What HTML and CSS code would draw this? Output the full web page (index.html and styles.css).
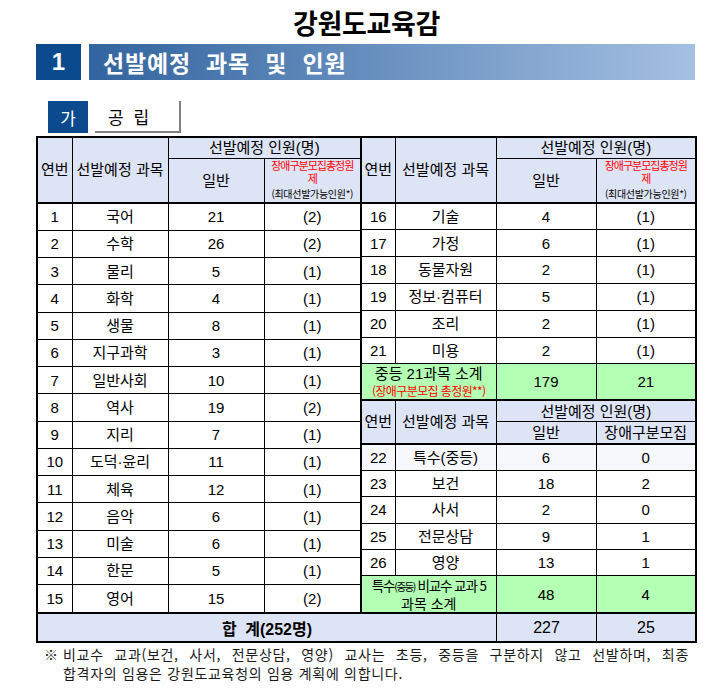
FILE: index.html
```html
<!DOCTYPE html>
<html lang="ko">
<head>
<meta charset="utf-8">
<title>강원도교육감</title>
<link rel="stylesheet" href="styles.css">
</head>
<body>
<div class="page">
  <h1 class="title">강원도교육감</h1>
  <div class="section">
    <div class="sec-num">1</div>
    <div class="sec-bar">선발예정 과목 및 인원</div>
  </div>
  <div class="sub">
    <div class="sub-num">가</div>
    <div class="sub-label">공 립</div>
  </div>

  <div class="tables">
    <table class="t lt">
      <colgroup><col class="lc1"><col class="lc2"><col class="lc3"><col class="lc4"></colgroup>
      <thead>
        <tr class="h1"><th rowspan="2" class="thick">연번</th><th rowspan="2" class="thick">선발예정 과목</th><th colspan="2">선발예정 인원(명)</th></tr>
        <tr class="h2"><th class="thick">일반</th><th class="thick dis"><div class="dis-box"><span class="red">장애구분모집총정원<br>제</span><span class="small">(최대선발가능인원*)</span></div></th></tr>
      </thead>
      <tbody>
        <tr class="lr"><td>1</td><td>국어</td><td>21</td><td>(2)</td></tr>
        <tr class="lr"><td>2</td><td>수학</td><td>26</td><td>(2)</td></tr>
        <tr class="lr"><td>3</td><td>물리</td><td>5</td><td>(1)</td></tr>
        <tr class="lr"><td>4</td><td>화학</td><td>4</td><td>(1)</td></tr>
        <tr class="lr"><td>5</td><td>생물</td><td>8</td><td>(1)</td></tr>
        <tr class="lr"><td>6</td><td>지구과학</td><td>3</td><td>(1)</td></tr>
        <tr class="lr"><td>7</td><td>일반사회</td><td>10</td><td>(1)</td></tr>
        <tr class="lr"><td>8</td><td>역사</td><td>19</td><td>(2)</td></tr>
        <tr class="lr"><td>9</td><td>지리</td><td>7</td><td>(1)</td></tr>
        <tr class="lr"><td>10</td><td>도덕·윤리</td><td>11</td><td>(1)</td></tr>
        <tr class="lr"><td>11</td><td>체육</td><td>12</td><td>(1)</td></tr>
        <tr class="lr"><td>12</td><td>음악</td><td>6</td><td>(1)</td></tr>
        <tr class="lr"><td>13</td><td>미술</td><td>6</td><td>(1)</td></tr>
        <tr class="lr"><td>14</td><td>한문</td><td>5</td><td>(1)</td></tr>
        <tr class="lr"><td>15</td><td>영어</td><td>15</td><td>(2)</td></tr>
      </tbody>
    </table>

    <table class="t rt">
      <colgroup><col class="rc1"><col class="rc2"><col class="rc3"><col class="rc4"></colgroup>
      <thead>
        <tr class="h1"><th rowspan="2" class="thick">연번</th><th rowspan="2" class="thick">선발예정 과목</th><th colspan="2">선발예정 인원(명)</th></tr>
        <tr class="h2"><th class="thick">일반</th><th class="thick dis"><div class="dis-box"><span class="red">장애구분모집총정원<br>제</span><span class="small">(최대선발가능인원*)</span></div></th></tr>
      </thead>
      <tbody>
        <tr class="ra"><td>16</td><td>기술</td><td>4</td><td>(1)</td></tr>
        <tr class="ra"><td>17</td><td>가정</td><td>6</td><td>(1)</td></tr>
        <tr class="ra"><td>18</td><td>동물자원</td><td>2</td><td>(1)</td></tr>
        <tr class="ra"><td>19</td><td>정보·컴퓨터</td><td>5</td><td>(1)</td></tr>
        <tr class="ra"><td>20</td><td>조리</td><td>2</td><td>(1)</td></tr>
        <tr class="ra"><td>21</td><td>미용</td><td>2</td><td>(1)</td></tr>
        <tr class="subt"><td colspan="2" class="green thick"><div class="st1">중등 21과목 소계</div><div class="st2">(장애구분모집 총정원**)</div></td><td class="green thick num-l">179</td><td class="green thick num-l">21</td></tr>
        <tr class="hb1"><th rowspan="2" class="thick">연번</th><th rowspan="2" class="thick">선발예정 과목</th><th colspan="2">선발예정 인원(명)</th></tr>
        <tr class="hb2"><th class="thick">일반</th><th class="thick">장애구분모집</th></tr>
        <tr class="rb tint"><td>22</td><td>특수(중등)</td><td>6</td><td>0</td></tr>
        <tr class="rb"><td>23</td><td>보건</td><td>18</td><td>2</td></tr>
        <tr class="rb"><td>24</td><td>사서</td><td>2</td><td>0</td></tr>
        <tr class="rb"><td>25</td><td>전문상담</td><td>9</td><td>1</td></tr>
        <tr class="rb"><td>26</td><td>영양</td><td>13</td><td>1</td></tr>
        <tr class="subt"><td colspan="2" class="green"><div class="sp1">특수<span class="sq">(중등)</span> 비교수 교과 5</div><div class="sp2">과목 소계</div></td><td class="green num-l">48</td><td class="green num-l">4</td></tr>
      </tbody>
    </table>
  </div>

  <div class="total">
    <div class="tl">합 계(252명)</div>
    <div class="tv">227</div>
    <div class="tv tv2">25</div>
  </div>

  <div class="note">
    <div class="nl1"><span class="mark">※</span><span class="txt1">비교수 교과(보건, 사서, 전문상담, 영양) 교사는 초등, 중등을 구분하지 않고 선발하며, 최종</span></div>
    <div class="nl2">합격자의 임용은 강원도교육청의 임용 계획에 의합니다.</div>
  </div>
</div>
</body>
</html>
```

FILE: styles.css
```css
* { box-sizing: border-box; }

body {
  margin: 0;
  background: #fff;
  color: #000;
  font-family: "Noto Sans CJK KR", sans-serif;
}

.page {
  width: 661px;
  margin-left: 36px;
}

.title {
  margin: 0;
  height: 44px;
  padding-top: 2px;
  font-size: 27px;
  line-height: 42px;
  font-weight: 700;
  letter-spacing: -0.3px;
  text-align: center;
}

.section {
  display: flex;
  gap: 8px;
  height: 36px;
}

.sec-num {
  width: 45px;
  background: #0b4a8c;
  color: #fff;
  font-family: "Liberation Sans", sans-serif;
  font-weight: 700;
  font-size: 24px;
  display: flex;
  align-items: center;
  justify-content: center;
}

.sec-bar {
  width: 606px;
  background: linear-gradient(to right, #32649f, #a4c0e2);
  color: #fff;
  font-weight: 700;
  font-size: 23px;
  letter-spacing: 0.8px;
  word-spacing: 8px;
  padding-left: 14px;
  display: flex;
  align-items: center;
}

.sub {
  display: flex;
  gap: 7px;
  height: 32px;
  margin-top: 21px;
  margin-left: 12px;
}

.sub-num {
  width: 40px;
  background: #0b4a8c;
  color: #fff;
  font-size: 17px;
  display: flex;
  align-items: center;
  justify-content: center;
}

.sub-label {
  width: 86px;
  border-right: 2px solid #808080;
  border-bottom: 2px solid #808080;
  font-size: 17px;
  word-spacing: 5px;
  padding-left: 13px;
  display: flex;
  align-items: center;
}

/* tables */
.tables {
  margin-top: 3px;
  display: flex;
  gap: 2px;
  align-items: flex-start;
  background: #000;
  border: 2px solid #000;
}

.t {
  border-collapse: collapse;
  border-style: hidden;
  table-layout: fixed;
  background: #fff;
  height: 474px;
  font-family: "Liberation Sans", "Noto Sans CJK KR", sans-serif;
}

.t th, .t td {
  border: 1px solid #000;
  padding: 0;
  text-align: center;
  vertical-align: middle;
  font-weight: normal;
  font-size: 15px;
  line-height: 1.15;
  white-space: nowrap;
}

.t th { background: #dde4f6; }

.t .thick { border-bottom: 2px solid #000; }

.lt { width: 322px; }
.lc1 { width: 34px; }
.lc2 { width: 96px; }
.lc3 { width: 96px; }
.lc4 { width: 96px; }

.rt { width: 333px; }
.rc1 { width: 33px; }
.rc2 { width: 101px; }
.rc3 { width: 100px; }
.rc4 { width: 99px; }

.h1 { height: 20px; }
.h2 { height: 45px; }
.lr { height: 27.27px; }
.ra { height: 26.8px; }
.rb { height: 26.4px; }
.subt { height: 36px; }
.hb1 { height: 22px; }
.hb2 { height: 22px; }

.tint td { background: #f6f8fc; }

.dis { vertical-align: top; }

.dis-box {
  height: 43px;
  display: flex;
  flex-direction: column;
  align-items: center;
}

.red {
  display: block;
  color: #ff0000;
  font-family: "Noto Sans CJK KR", sans-serif;
  font-size: 11px;
  line-height: 13px;
  letter-spacing: -1px;
}

.small {
  margin-top: auto;
  font-family: "Noto Sans CJK KR", sans-serif;
  font-size: 10px;
  line-height: 14px;
  letter-spacing: -0.3px;
  padding-bottom: 1px;
}

.t .green { background: #b3ffb3; }

.num-l { font-size: 16px; }

.st1 {
  font-size: 15px;
  line-height: 18px;
}

.st2 {
  color: #ff0000;
  font-family: "Noto Sans CJK KR", sans-serif;
  font-size: 12px;
  line-height: 15px;
  letter-spacing: -0.6px;
}

.sp1 {
  font-family: "Noto Sans CJK KR", sans-serif;
  font-size: 13.5px;
  line-height: 16px;
  letter-spacing: -1.1px;
}

.sq {
  font-size: 10.5px;
  letter-spacing: -1.5px;
}

.sp2 {
  font-family: "Noto Sans CJK KR", sans-serif;
  font-size: 14px;
  line-height: 16px;
}

/* total row */
.total {
  display: flex;
  height: 29px;
  border: 2px solid #000;
  border-top: 0;
  background: #dde4f6;
  font-family: "Liberation Sans", "Noto Sans CJK KR", sans-serif;
  font-size: 16px;
}

.tl {
  flex: 0 0 458px;
  display: flex;
  align-items: center;
  justify-content: center;
  font-weight: 700;
  word-spacing: 4px;
}

.tv {
  flex: 0 0 100px;
  border-left: 1px solid #000;
  display: flex;
  align-items: center;
  justify-content: center;
}

.tv2 { flex: 1 1 auto; }

/* footnote */
.note {
  margin-top: 2px;
  padding-right: 8px;
  font-size: 14px;
  line-height: 19px;
  letter-spacing: 0.7px;
  color: #1a1a1a;
}

.nl1 { display: flex; }

.mark {
  flex: 0 0 27px;
  padding-left: 8px;
  letter-spacing: 0;
}

.txt1 {
  flex: 1 1 auto;
  text-align: justify;
  text-align-last: justify;
}

.nl2 { padding-left: 27px; }
```
